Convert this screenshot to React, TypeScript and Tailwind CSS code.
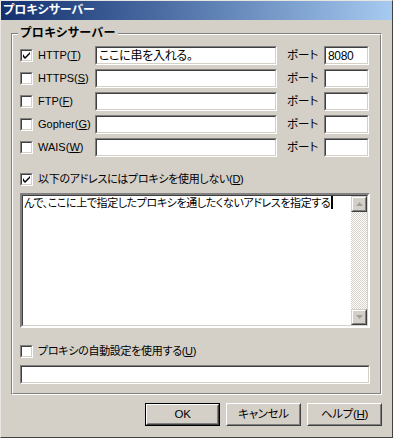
import React from 'react';

const font = "font-['Liberation_Sans','Noto_Sans_CJK_JP',sans-serif] [font-feature-settings:'palt']";

// sunken 3d edge used by edit boxes and checkboxes
const sunken =
  'border-2 border-t-[#808080] border-l-[#808080] border-r-white border-b-white';
const sunkenInner =
  'border border-t-[#404040] border-l-[#404040] border-r-[#d4d0c8] border-b-[#d4d0c8]';

const Check = ({ on }: { on?: boolean }) => (
  <div className="w-[13px] h-[13px] shrink-0 flex border border-t-[#808080] border-l-[#808080] border-r-white border-b-white">
    <div className={`flex-1 bg-white ${sunkenInner} flex items-center justify-center`}>
      {on && (
        <svg width="9" height="9" viewBox="0 0 9 9">
          <path d="M1 3v3l2 2 5-5V1L3 6z" fill="#000" />
        </svg>
      )}
    </div>
  </div>
);

const Field = ({ w, text }: { w: string; text?: string }) => (
  <div className={`${w} h-[19px] shrink-0 flex border border-t-[#808080] border-l-[#808080] border-r-white border-b-white`}>
    <div className={`flex-1 bg-white ${sunkenInner} pl-[2px] text-[12px] leading-[16px] tracking-[-0.3px] text-black overflow-hidden whitespace-nowrap`}>
      {text}
    </div>
  </div>
);

const rows = [
  { label: 'HTTP', key: 'T', on: true, text: 'ここに串を入れる。', port: '8080' },
  { label: 'HTTPS', key: 'S' },
  { label: 'FTP', key: 'F' },
  { label: 'Gopher', key: 'G' },
  { label: 'WAIS', key: 'W' },
];

const Button = ({ children, main }: { children: React.ReactNode; main?: boolean }) => (
  <div className={`w-[75px] h-[23px] flex ${main ? 'border border-black' : ''}`}>
    <div className="flex-1 flex border border-t-white border-l-white border-r-[#404040] border-b-[#404040]">
      <div className="flex-1 flex items-center justify-center border border-t-[#d4d0c8] border-l-[#d4d0c8] border-r-[#808080] border-b-[#808080] text-[11.5px] tracking-[-0.3px] text-black">
        {children}
      </div>
    </div>
  </div>
);

const Arrow = ({ up }: { up?: boolean }) => (
  <div className="w-[16px] h-[16px] flex border border-t-[#d4d0c8] border-l-[#d4d0c8] border-r-[#404040] border-b-[#404040]">
    <div className="flex-1 flex items-center justify-center border border-t-white border-l-white border-r-[#808080] border-b-[#808080] bg-[#d4d0c8]">
      <svg width="7" height="4" viewBox="0 0 7 4">
        {up ? <path d="M3.5 0L7 4H0z" fill="#a0a0a0" /> : <path d="M0 0h7L3.5 4z" fill="#a0a0a0" />}
      </svg>
    </div>
  </div>
);

export default function App() {
  return (
    <div className={`${font} w-[393px] h-[438px] bg-[#d4d0c8] flex flex-col border border-t-[#e8e6e2] border-l-[#e8e6e2] border-r-[#404040] border-b-[#404040]`}>
      <div className="h-[19px] bg-gradient-to-r from-[#14306f] to-[#a6caf0] text-white font-bold text-[12px] leading-[19px] pl-[2px]">
        プロキシサーバー
      </div>

      <div className="relative mt-[13px] ml-[10px] w-[371px] h-[362px] border border-t-[#808080] border-l-[#808080] border-r-white border-b-white">
        <span className="absolute -top-[8px] left-[6px] px-[2px] bg-[#d4d0c8] text-[12px] font-bold leading-[14px] tracking-[0.5px] text-black">
          プロキシサーバー
        </span>
        <div className="h-full border border-t-white border-l-white border-r-[#808080] border-b-[#808080] pt-[11px] pl-[7px] flex flex-col">
          <div className="flex flex-col gap-[4px]">
            {rows.map((r) => (
              <div key={r.label} className="flex items-center h-[19px] text-black">
                <Check on={r.on} />
                <span className="ml-[5px] w-[57px] whitespace-nowrap text-[11px]">
                  {r.label}(<u>{r.key}</u>)
                </span>
                <Field w="w-[182px]" text={r.text} />
                <span className="ml-[10px] w-[37px] text-[11.5px]">ポート</span>
                <Field w="w-[45px]" text={r.port} />
              </div>
            ))}
          </div>

          <div className="mt-[16px] flex items-center h-[13px] text-[11px] tracking-[-0.3px] text-black">
            <Check on />
            <span className="ml-[5px] whitespace-nowrap">
              以下のアドレスにはプロキシを使用しない(<u>D</u>)
            </span>
          </div>

          <div className={`mt-[7px] w-[350px] h-[135px] flex ${sunken}`}>
            <div className={`flex-1 flex bg-white ${sunkenInner}`}>
              <div className="flex-1 pl-[1px] text-[11px] leading-[15px] tracking-[-0.4px] text-black whitespace-nowrap overflow-hidden">
                んで、ここに上で指定したプロキシを通したくないアドレスを指定する
                <span className="inline-block w-[2px] h-[13px] bg-black align-[-2px] ml-[1px]" />
              </div>
              <div className="w-[16px] flex flex-col bg-[repeating-conic-gradient(#d4d0c8_0_25%,#ffffff_0_50%)] bg-[length:2px_2px]">
                <Arrow up />
                <div className="flex-1" />
                <Arrow />
              </div>
            </div>
          </div>

          <div className="mt-[17px] flex items-center h-[13px] text-[11px] tracking-[-0.3px] text-black">
            <Check />
            <span className="ml-[5px] whitespace-nowrap">
              プロキシの自動設定を使用する(<u>U</u>)
            </span>
          </div>

          <div className="mt-[7px]">
            <Field w="w-[350px]" />
          </div>
        </div>
      </div>

      <div className="mt-[8px] pr-[10px] flex justify-end gap-[6px]">
        <Button main>OK</Button>
        <Button>キャンセル</Button>
        <Button>
          ヘルプ(<u>H</u>)
        </Button>
      </div>
    </div>
  );
}
